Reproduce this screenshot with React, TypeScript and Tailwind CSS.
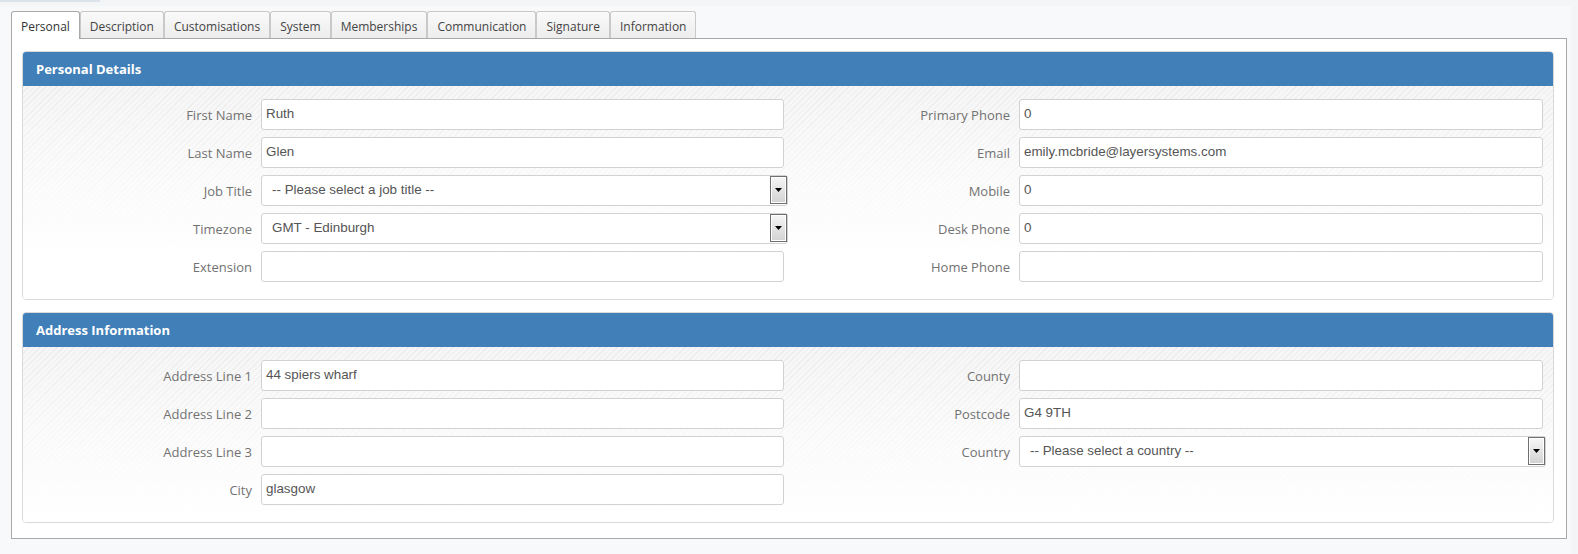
const tabs = [
  'Personal',
  'Description',
  'Customisations',
  'System',
  'Memberships',
  'Communication',
  'Signature',
  'Information',
];

type Field = { label: string; value?: string; select?: boolean };

const personalLeft: Field[] = [
  { label: 'First Name', value: 'Ruth' },
  { label: 'Last Name', value: 'Glen' },
  { label: 'Job Title', value: '-- Please select a job title --', select: true },
  { label: 'Timezone', value: 'GMT - Edinburgh', select: true },
  { label: 'Extension' },
];

const personalRight: Field[] = [
  { label: 'Primary Phone', value: '0' },
  { label: 'Email', value: 'emily.mcbride@layersystems.com' },
  { label: 'Mobile', value: '0' },
  { label: 'Desk Phone', value: '0' },
  { label: 'Home Phone' },
];

const addressLeft: Field[] = [
  { label: 'Address Line 1', value: '44 spiers wharf' },
  { label: 'Address Line 2' },
  { label: 'Address Line 3' },
  { label: 'City', value: 'glasgow' },
];

const addressRight: Field[] = [
  { label: 'County' },
  { label: 'Postcode', value: 'G4 9TH' },
  { label: 'Country', value: '-- Please select a country --', select: true },
];

const Control = ({ value, select, wide }: { value?: string; select?: boolean; wide?: boolean }) => {
  if (select) {
    return (
      <div
        className={`flex h-[31px] items-stretch rounded-[3px] border border-[#d2d2d2] bg-white font-['Liberation_Sans',Arial,sans-serif] text-[13.4px] text-[#555] ${
          wide ? 'mr-[-3px] flex-1' : 'w-[527px]'
        }`}
      >
        <span className="flex flex-1 items-center pl-[10px]">{value}</span>
        <span className="mb-px flex w-[17px] items-center justify-center border border-[#6f6f6f] bg-[linear-gradient(to_bottom,#f6f6f6,#d2d2d2)] shadow-[inset_0_0_0_1px_#fff]">
          <svg width="7" height="4" viewBox="0 0 7 4">
            <path d="M0 0h7L3.5 4z" fill="#000" />
          </svg>
        </span>
      </div>
    );
  }
  return (
    <div
      className={`flex h-[31px] items-center rounded-[3px] border border-[#d2d2d2] bg-white pl-[4px] font-['Liberation_Sans',Arial,sans-serif] text-[13.4px] text-[#555] ${
        wide ? 'flex-1' : 'w-[523px]'
      }`}
    >
      {value}
    </div>
  );
};

const Column = ({ fields, labelWidth, right }: { fields: Field[]; labelWidth: string; right?: boolean }) => (
  <div className={right ? 'flex flex-1 flex-col gap-[7px] pr-[10px]' : 'flex w-[765px] flex-col gap-[7px]'}>
    {fields.map((f) => (
      <div key={f.label} className="flex items-center gap-[9px]">
        <label className={`${labelWidth} shrink-0 pt-[3px] text-right text-[13px] text-[#727272]`}>{f.label}</label>
        <Control value={f.value} select={f.select} wide={right} />
      </div>
    ))}
  </div>
);

const Section = ({ title, left, right }: { title: string; left: Field[]; right: Field[] }) => (
  <div className="overflow-hidden rounded-[4px] border border-[#dadada]">
    <div className="flex h-[34px] items-center bg-[#417fb9] pt-px pl-[13px] text-[13px] font-bold text-white">{title}</div>
    <div className="flex bg-[linear-gradient(to_bottom,rgba(255,255,255,0)_0px,rgba(255,255,255,0.6)_90px,#fff_170px),repeating-linear-gradient(135deg,#ececec_0px,#ececec_1px,#f6f6f6_1px,#f6f6f6_4px)] pt-[13px] pb-[17px]">
      <Column fields={left} labelWidth="w-[229px]" />
      <Column fields={right} labelWidth="w-[222px]" right />
    </div>
  </div>
);

export default function App() {
  return (
    <div className="min-h-[554px] bg-[#f4f5f7] font-['Open_Sans',sans-serif]">
      <div className="h-[2px] w-[100px] bg-[#dde3eb]" />
      <div className="mt-[4px] w-[1571px] bg-[#f8f9fa] pt-[5px] pb-[15px] pl-[11px]">
        <div className="relative z-10 -mb-px flex h-[28px] items-stretch">
          {tabs.map((t, i) => (
            <div
              key={t}
              className={
                i === 0
                  ? 'flex items-center rounded-t-[3px] border border-b-0 border-[#a9a9a9] bg-white px-[9px] pt-[3px] text-[12px] text-[#333]'
                  : 'mb-px flex items-center rounded-t-[3px] border border-b-0 border-[#c9c9c9] bg-[linear-gradient(to_bottom,#fafafa,#ededed)] px-[9px] pt-[3px] text-[12px] text-[#444]'
              }
            >
              {t}
            </div>
          ))}
        </div>
        <div className="flex w-[1556px] flex-col gap-[12px] border border-[#a9a9a9] bg-white pt-[12px] pr-[12px] pb-[15px] pl-[10px]">
          <Section title="Personal Details" left={personalLeft} right={personalRight} />
          <Section title="Address Information" left={addressLeft} right={addressRight} />
        </div>
      </div>
    </div>
  );
}
